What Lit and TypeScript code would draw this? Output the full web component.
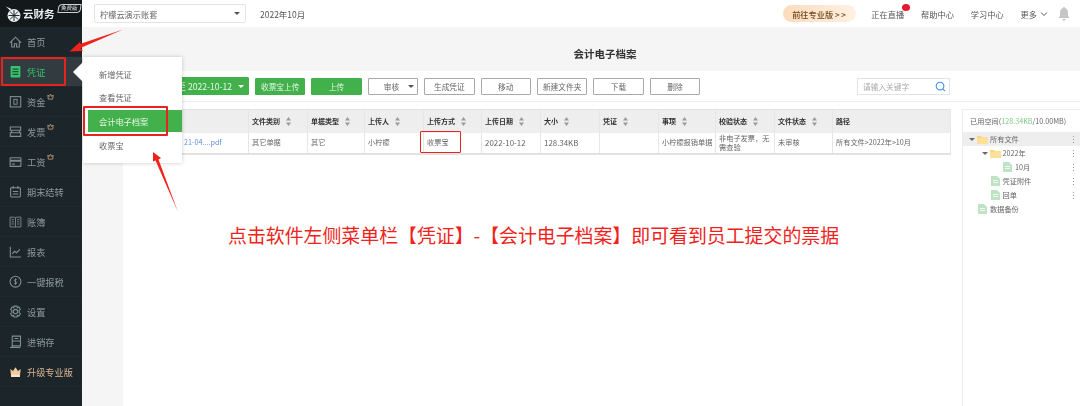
import { LitElement, html, css, svg } from "lit";
import { customElement } from "lit/decorators.js";

const ICONS: Record<string, unknown> = {
  home: svg`<path d="M.8 7.300 6 2l5.200 5.300M2.500 6v5h2.500V8h2v3h2.500V6" />`,
  voucher: svg`<rect x="1.500" y="1" width="9" height="10.500" rx=".6" fill="#35c46b" stroke="none"/><path d="M3.200 3.800h5.600M3.200 6.200h5.600M3.200 8.600h5.600" stroke="#1c2c28" stroke-width=".9"/>`,
  fund: svg`<rect x="1.200" y="1.500" width="9.600" height="9.500" /><rect x="4.500" y="4" width="3" height="4.500" stroke-width=".9"/>`,
  invoice: svg`<path d="M1.200 1.800h9.600v3H1.200zM2.400 4.800v2.400M9.600 4.800v2.400M1.200 7.200h9.600v3.300H1.200z"/>`,
  pay: svg`<rect x="1" y="2.500" width="10" height="8" rx=".6"/><rect x="1" y="4.400" width="10" height="1.800" fill="currentColor" stroke="none"/><path d="M2.500 8.400h3"/>`,
  period: svg`<rect x="1.500" y="2.500" width="9" height="8.500" rx=".8"/><path d="M3.800 1v2.400M8.200 1v2.400M3.500 6h5M3.500 8.300h5"/>`,
  books: svg`<path d="M1 2h4.400l.6.600.6-.600H11v9H6.600l-.6.400-.6-.400H1zM6 2.600V11M2.400 4.300h2.200M2.400 6.300h2.200M2.400 8.300h2.200M7.400 4.300h2.200M7.400 6.300h2.200M7.400 8.300h2.200" stroke-width=".8"/>`,
  chart: svg`<path d="M1.200 1.500V11h9.800M3 8.200l2.200-2.400 1.800 1.300L10 4"/>`,
  tax: svg`<circle cx="6" cy="6.200" r="5"/><path d="M7.400 4.600C7 3.900 4.900 3.800 4.800 5c-.1 1.400 2.600.8 2.500 2.300-.1 1.200-2.300 1.100-2.800.3M6 3.200v6" stroke-width=".8"/>`,
  gear: svg`<path d="M4.700 1h2.600l.4 1.500 1.400-.7 1.400 2.200-1.200 1 .2 1-.2 1 1.200 1-1.400 2.200-1.400-.7-.4 1.500H4.700l-.4-1.500-1.400.7L1.500 8l1.200-1-.2-1 .2-1-1.200-1 1.400-2.200 1.400.7z"/><circle cx="6" cy="6" r="2"/>`,
  stock: svg`<path d="M3 1h7.600v9H3zM3 5.500h7.600M5 3.200h3.600M3 1v9.600L1.400 12M1 11.600h9.600"/>`,
  crown: svg`<path d="M1.200 3.600 3.700 5.600 6 2l2.300 3.600 2.500-2-.8 7.400H2z" fill="#f0c9a0" stroke="none"/><path d="M2 9h8v2H2z" fill="#fbe3c7" stroke="none"/>`,
};

const MENU = [
  { k: "home", t: "首页" },
  { k: "voucher", t: "凭证", active: true },
  { k: "fund", t: "资金", crown: true },
  { k: "invoice", t: "发票", crown: true },
  { k: "pay", t: "工资", crown: true },
  { k: "period", t: "期末结转" },
  { k: "books", t: "账簿" },
  { k: "chart", t: "报表" },
  { k: "tax", t: "一键报税" },
  { k: "gear", t: "设置" },
  { k: "stock", t: "进销存" },
  { k: "crown", t: "升级专业版", gold: true },
];

const COLS = [125, 59, 57, 59, 58, 59, 59, 59, 57, 59, 58, 118];
const HEAD = ["", "文件类别", "单据类型", "上传人", "上传方式", "上传日期", "大小", "凭证", "事项", "校验状态", "文件状态", "路径"];
const ROW = ["21-04....pdf", "其它单据", "其它", "小柠檬", "收票宝", "2022-10-12", "128.34KB", "", "小柠檬报销单据", "非电子发票，无需查验", "未审核", "所有文件>2022年>10月"];
const TOOLS = ["生成凭证", "移动", "新建文件夹", "下载", "删除"];

const TREE = [
  { t: "所有文件", lvl: 0, folder: true, open: true, sel: true, dots: true },
  { t: "2022年", lvl: 1, folder: true, open: true, dots: true },
  { t: "10月", lvl: 2, dots: true },
  { t: "凭证附件", lvl: 1, dots: true },
  { t: "回单", lvl: 1, dots: true },
  { t: "数据备份", lvl: 0 },
];

@customElement("app-root")
export class AppRoot extends LitElement {
  static styles = css`
    :host {
      display: block;
      position: relative;
      width: 1080px;
      height: 406px;
      overflow: hidden;
      font-family: "Noto Sans CJK SC", "Open Sans", sans-serif;
      font-size: 8.2px;
      color: #555;
      background: #fff;
    }
    * { box-sizing: border-box; }
    .app { display: flex; height: 406px; filter: blur(0.4px); }
    aside { width: 82px; flex: none; background: #1c2529; display: flex; flex-direction: column; }
    .logo { height: 27px; background: #13181b; display: flex; align-items: center; padding-left: 5px; color: #eceeee; }
    .logo svg { width: 17px; height: 18px; flex: none; }
    .logo b { font-size: 10.5px; font-weight: 700; margin-left: 1px; }
    .free { font-size: 5.5px; border: 1px solid #cfd3d4; border-radius: 4px 0 4px 0; padding: 0 2px; line-height: 7px; margin: -11px 0 0 3px; white-space: nowrap; transform: skewX(-8deg); }
    .mi { height: 30px; flex: none; display: flex; align-items: center; padding-left: 9px; color: #8b9a9d; font-size: 9.2px; border-bottom: 1px solid #20292d; }
    .mi svg.ic { width: 13px; height: 13px; margin-right: 5px; flex: none; fill: none; stroke: #7f9093; stroke-width: 1; color: #7f9093; }
    .mi.active { background: #323c40; color: #35c46b; }
    .mi.gold { color: #d9b796; }
    .mi .cr { width: 7px; height: 7px; margin: -10px 0 0 2px; fill: none; stroke: #c7a27c; stroke-width: 1.4; }
    main { flex: 1; min-width: 0; display: flex; flex-direction: column; background: #f5f5f5; }
    .top { height: 27px; flex: none; background: #fff; display: flex; align-items: center; padding-left: 12px; }
    .sel { width: 152px; height: 19px; border: 1px solid #e4e4e4; border-radius: 2px; display: flex; align-items: center; justify-content: space-between; padding: 0 5px; color: #666; }
    .caret { width: 0; height: 0; border: 3px solid transparent; border-top: 3.5px solid #555; border-bottom: 0; flex: none; }
    .month { margin-left: 14px; color: #555; font-size: 8.5px; }
    .links { margin-left: auto; display: flex; align-items: center; }
    .pro { width: 73px; height: 17px; border-radius: 9px; background: linear-gradient(90deg, #fbdcbc, #fff1e2); color: #74481f; font-weight: 500; display: flex; align-items: center; justify-content: center; gap: 2px; margin-right: 15px; }
    .pro span { letter-spacing: 1.5px; }
    .lk { margin-right: 17px; position: relative; color: #555; white-space: nowrap; }
    .dot { position: absolute; right: -6px; top: -4px; width: 8px; height: 7px; border-radius: 50%; background: #e8192c; }
    .chev { width: 8px; height: 8px; margin: 0 0 0 3px; fill: none; stroke: #555; }
    .more { display: flex; align-items: center; margin-right: 10px; }
    .bell { width: 12px; height: 14px; margin-right: 10px; fill: #c6c6c6; }
    .body { flex: 1; min-height: 0; padding-left: 41px; display: flex; flex-direction: column; }
    .title { height: 44px; flex: none; display: flex; align-items: center; justify-content: center; margin-left: -41px; padding-left: 48px; font-size: 10.5px; font-weight: 700; color: #333; padding-top: 8px; }
    .panel { flex: 1; min-height: 0; background: #fff; display: flex; flex-direction: column; }
    .bar { height: 31px; flex: none; display: flex; align-items: center; gap: 6px; padding-left: 40px; border-bottom: 1px solid #ececec; padding-right: 130px; font-size: 7.7px; }
    .btn { height: 17px; width: 50.4px; flex: none; display: flex; align-items: center; justify-content: center; border: 1px solid #a9a9a9; border-radius: 1px; color: #666; background: #fff; white-space: nowrap; }
    .btn.g { background: #43b14b; border-color: #43b14b; color: #e6f6e7; }
    .btn.date { width: 86px; height: 18px; gap: 6px; justify-content: flex-end; padding-right: 4px; font-size: 8.6px; }
    .date .caret { border-top-color: #fff; }
    .btn.drop { gap: 9px; padding-left: 12px; }
    .search { margin-left: auto; width: 93px; height: 17px; border: 1px solid #e3e3e3; display: flex; align-items: center; justify-content: space-between; padding: 0 3px 0 5px; color: #aaa; flex: none; }
    .search svg { width: 11px; height: 11px; fill: none; stroke: #4a90e2; stroke-width: 1.2; }
    .lower { flex: 1; min-height: 0; display: flex; justify-content: space-between; align-items: flex-start; padding-top: 7px; }
    table { width: 827px; table-layout: fixed; border-collapse: collapse; border: 1px solid #e2e2e2; border-bottom-width: 2px; flex: none; }
    th { height: 23px; background: #eeeeee; text-align: left; padding: 0 0 0 3px; color: #333; font-weight: 700; font-size: 7px; border-right: 1px solid #e6e6e6; white-space: nowrap; }
    td { height: 21px; padding: 0 2px 0 3px; color: #666; border-right: 1px solid #e6e6e6; line-height: 9px; font-size: 7.2px; }
    td.file { color: #5b8fe0; padding-left: 60px; white-space: nowrap; }
    td.num { font-size: 7.9px; white-space: nowrap; }
    .sort { display: inline-block; width: 5px; height: 9px; margin-left: 6px; vertical-align: -2px; fill: #9a9a9a; }
    .side { width: 118px; flex: none; align-self: stretch; border: 1px solid #eee; border-bottom: 0; border-right: 0; font-size: 7.2px; }
    .used { height: 22px; display: flex; align-items: center; padding-left: 7px; white-space: nowrap; color: #666; }
    .used em { font-style: normal; color: #7ccb85; }
    .node { height: 14px; display: flex; align-items: center; color: #666; position: relative; }
    .node.sel2 { background: #eeeeee; }
    .node .tw { width: 6px; margin-right: 2px; flex: none; }
    .node .tw .caret { border-top-color: #666; }
    .node svg { width: 11px; height: 10px; margin-right: 2px; flex: none; }
    .vd { position: absolute; right: 6px; top: 4px; width: 1px; height: 7px; background: linear-gradient(#999 20%, transparent 20% 40%, #999 40% 60%, transparent 60% 80%, #999 80%); }
    .pop { position: absolute; left: 83px; top: 57px; width: 99px; height: 106px; background: #fff; box-shadow: 0 0 4px rgba(0,0,0,.22); padding-top: 5px; filter: blur(0.4px); }
    .pop::before { content: ""; position: absolute; left: -10px; top: 5px; border: 10px solid transparent; border-left: 0; border-right: 10px solid #fff; }
    .pi { height: 23px; display: flex; align-items: center; padding-left: 16px; color: #666; }
    .pi.on { background: #43b14b; color: #eaf7eb; margin-left: 5px; padding-left: 11px; height: 22px; margin-top: 2px; margin-bottom: 1px; }
    .hl { position: absolute; border: 2px solid #e8221c; border-radius: 1px; pointer-events: none; }
    .h1 { left: 1px; top: 57px; width: 65px; height: 29px; }
    .h2 { left: 83px; top: 106px; width: 85px; height: 30px; }
    .h3 { left: 420px; top: 131px; width: 41px; height: 22px; border-width: 1.5px; }
    .arrows { position: absolute; left: 0; top: 0; width: 1080px; height: 406px; pointer-events: none; }
    .note { position: absolute; left: 228px; top: 221px; font-size: 18.9px; line-height: 28px; color: #f0231c; white-space: nowrap; }
  `;

  render() {
    const sort = svg`<path d="M2.500 0 5 3.600H0zM0 5.400h5L2.500 9z"/>`;
    const folder = svg`<path d="M0 2h4l1 1.200h6V10H0z" fill="#fcd479"/><path d="M0 3.800h11V10H0z" fill="#fde09a"/>`;
    const doc = svg`<path d="M1 0h6l3 3v7H1z" fill="#bfe3c5"/><path d="M3 4.500h5M3 6.500h5" stroke="#fff" stroke-width=".8"/>`;
    return html`
      <div class="app">
        <aside>
          <div class="logo">
            <svg viewBox="0 0 17 18"><circle cx="9" cy="10.500" r="6.500" fill="#eceeee"/><path d="M9 5v11M3.500 10.500h11M5 6.500l8 8M13 6.500l-8 8" stroke="#13181b" stroke-width=".9"/><path d="M1 1.500 6.500 4 5 5.500z" fill="#eceeee"/></svg>
            <b>云财务</b><span class="free">免费版</span>
          </div>
          ${MENU.map(
            (m) => html`<div class="mi ${m.active ? "active" : ""} ${m.gold ? "gold" : ""}">
              <svg class="ic" viewBox="0 0 12 12">${ICONS[m.k]}</svg>${m.t}
              ${m.crown ? html`<svg class="cr" viewBox="0 0 12 12"><path d="M1.500 3.500 3.800 6 6 2l2.200 4 2.300-2.500-.7 7H2.200z"/></svg>` : ""}
            </div>`
          )}
        </aside>
        <main>
          <div class="top">
            <div class="sel"><span>柠檬云演示账套</span><i class="caret"></i></div>
            <span class="month">2022年10月</span>
            <div class="links">
              <div class="pro">前往专业版<span>&gt;&gt;</span></div>
              <span class="lk">正在直播<i class="dot"></i></span>
              <span class="lk">帮助中心</span>
              <span class="lk">学习中心</span>
              <span class="more">更多<svg class="chev" viewBox="0 0 8 8"><path d="M1 2.500 4 5.500 7 2.500"/></svg></span>
              <svg class="bell" viewBox="0 0 12 14"><path d="M6 0c.7 0 1 .5 1 1.100C9 1.700 10 3.400 10 5.500V9l1.500 2h-11L2 9V5.500c0-2.100 1-3.800 3-4.400C5 .5 5.300 0 6 0zM4.500 12h3c0 1-.7 1.800-1.500 1.800S4.500 13 4.500 12z"/></svg>
            </div>
          </div>
          <div class="body">
            <div class="title">会计电子档案</div>
            <div class="panel">
              <div class="bar">
                <div class="btn g date"><span>至 2022-10-12</span><i class="caret"></i></div>
                <div class="btn g">收票宝上传</div>
                <div class="btn g">上传</div>
                <div class="btn drop">审核<i class="caret"></i></div>
                ${TOOLS.map((t) => html`<div class="btn">${t}</div>`)}
                <div class="search"><span>请输入关键字</span><svg viewBox="0 0 12 12"><circle cx="5.500" cy="5.500" r="4.200"/><path d="M8.500 8.500 11 11"/></svg></div>
              </div>
              <div class="lower">
                <table>
                  <colgroup>${COLS.map((c) => html`<col style="width:${c}px" />`)}</colgroup>
                  <thead><tr>${HEAD.map((h, i) => html`<th>${h}${h && i !== 11 ? html`<svg class="sort" viewBox="0 0 5 9">${sort}</svg>` : ""}</th>`)}</tr></thead>
                  <tbody><tr>${ROW.map((c, i) => html`<td class="${i === 0 ? "file" : i === 5 || i === 6 ? "num" : ""}">${c}</td>`)}</tr></tbody>
                </table>
                <div class="side">
                  <div class="used">已用空间(<em>128.34KB</em>/10.00MB)</div>
                  ${TREE.map(
                    (n) => html`<div class="node ${n.sel ? "sel2" : ""}" style="padding-left:${6 + n.lvl * 12.5}px">
                      <span class="tw">${n.open ? html`<i class="caret" style="display:block"></i>` : ""}</span>
                      <svg viewBox="0 0 11 10">${n.folder ? folder : doc}</svg>${n.t}
                      ${n.dots ? html`<i class="vd"></i>` : ""}
                    </div>`
                  )}
                </div>
              </div>
            </div>
          </div>
        </main>
      </div>
      <div class="pop">
        <div class="pi">新增凭证</div>
        <div class="pi">查看凭证</div>
        <div class="pi on">会计电子档案</div>
        <div class="pi">收票宝</div>
      </div>
      <i class="hl h1"></i><i class="hl h2"></i><i class="hl h3"></i>
      <svg class="arrows" viewBox="0 0 1080 406">
        <path d="M123 29.500 80 44 81 41 69.500 51.500 83 51 80.500 48z" fill="#f0231c"/>
        <path d="M178 212 158.500 159.500 161 158 153 152 153 161.500 155.500 160.500z" fill="#f0231c"/>
      </svg>
      <div class="note">点击软件左侧菜单栏【凭证】-【会计电子档案】即可看到员工提交的票据</div>
    `;
  }
}
